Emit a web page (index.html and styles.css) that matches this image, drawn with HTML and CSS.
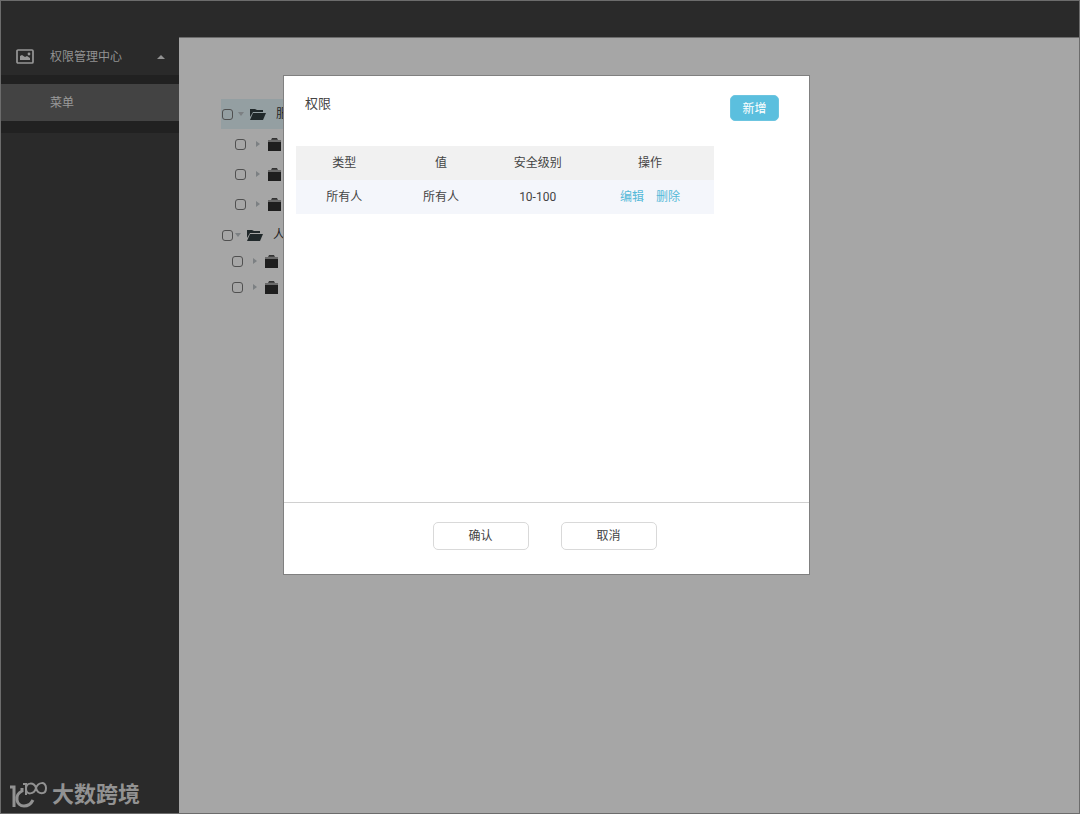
FILE: index.html
```html
<!DOCTYPE html>
<html lang="zh-CN">
<head>
    <meta charset="UTF-8">
    <meta name="viewport" content="width=device-width, initial-scale=1.0">
    <title>权限管理中心</title>
    <link rel="stylesheet" href="styles.css">
</head>
<body>
    <!-- shared icons -->
    <svg class="sprite" aria-hidden="true">
        <symbol id="folder" viewBox="0 0 14 13">
            <path fill="#444" d="M1 3V2h3l1-2h5l1 2h2v1z"/>
            <path fill="#1e1e1e" d="M1 4h13v9H1z"/>
            <path fill="#6a6a6a" d="M1 2h13v2H1z"/>
            <path fill="#333" d="M5 0h5v1H5z"/>
        </symbol>
        <symbol id="folder-open" viewBox="0 0 17 13">
            <path fill="#20282a" d="M1 9V1h5l2 1h6v2H4z"/>
            <path fill="#20282a" d="M4 5h13l-3 7H1z"/>
        </symbol>
    </svg>

    <header class="topbar"></header>
    <div class="page">
        <aside class="sidebar">
            <nav>
                <a class="menu-title" href="#">
                    <svg class="menu-icon" viewBox="0 0 18 15">
                        <rect x="1" y="1" width="16" height="13" rx="1" fill="none" stroke="#979797" stroke-width="1.7"/>
                        <path fill="#979797" d="M4 11V7l2-1 3 2 2-1 3 2v2z"/>
                        <circle cx="13" cy="5" r="1.4" fill="#979797"/>
                    </svg>
                    <span>权限管理中心</span>
                    <i class="caret-up"></i>
                </a>
                <ul class="submenu">
                    <li><a href="#">菜单</a></li>
                </ul>
            </nav>
            <div class="logo">
                <svg class="logo-mark" viewBox="0 0 39 26">
                    <g fill="none" stroke="#929292">
                        <path stroke-width="3" d="M1 5h4v20"/>
                        <path stroke-width="3" d="M13 6v3c-8 4-6 15 2 15 4 0 7-2 9-6"/>
                        <path stroke-width="2" d="M14 2h3v11"/>
                        <path stroke-width="2" d="M17 7c0-7 8-7 10-1 2 7 10 7 10 0s-8-6-10 0c-2 7-10 7-10 1"/>
                    </g>
                </svg>
                <span>大数跨境</span>
            </div>
        </aside>

        <main class="content">
            <ul class="tree">
                <li class="node open active">
                    <input type="checkbox" aria-label="服"><i class="arrow-down"></i>
                    <svg class="folder-open"><use href="#folder-open"/></svg><span>服</span>
                </li>
                <li class="node child">
                    <input type="checkbox" aria-label="1"><i class="arrow-right"></i>
                    <svg class="folder"><use href="#folder"/></svg>
                </li>
                <li class="node child">
                    <input type="checkbox" aria-label="2"><i class="arrow-right"></i>
                    <svg class="folder"><use href="#folder"/></svg>
                </li>
                <li class="node child">
                    <input type="checkbox" aria-label="3"><i class="arrow-right"></i>
                    <svg class="folder"><use href="#folder"/></svg>
                </li>
            </ul>
            <ul class="tree compact">
                <li class="node open">
                    <input type="checkbox" aria-label="人"><i class="arrow-down"></i>
                    <svg class="folder-open"><use href="#folder-open"/></svg><span>人</span>
                </li>
                <li class="node child">
                    <input type="checkbox" aria-label="1"><i class="arrow-right"></i>
                    <svg class="folder"><use href="#folder"/></svg>
                </li>
                <li class="node child">
                    <input type="checkbox" aria-label="2"><i class="arrow-right"></i>
                    <svg class="folder"><use href="#folder"/></svg>
                </li>
            </ul>
        </main>
    </div>

    <div class="overlay">
        <section class="modal" role="dialog" aria-labelledby="modal-title">
            <div class="modal-header">
                <h2 id="modal-title">权限</h2>
                <button class="btn-add" type="button">新增</button>
            </div>
            <div class="modal-body">
                <table>
                    <thead>
                        <tr>
                            <th>类型</th>
                            <th>值</th>
                            <th>安全级别</th>
                            <th class="actions">操作</th>
                        </tr>
                    </thead>
                    <tbody>
                        <tr>
                            <td>所有人</td>
                            <td>所有人</td>
                            <td>10-100</td>
                            <td class="actions"><a href="#">编辑</a><a href="#">删除</a></td>
                        </tr>
                    </tbody>
                </table>
            </div>
            <div class="modal-footer">
                <button type="button">确认</button>
                <button type="button">取消</button>
            </div>
        </section>
    </div>
</body>
</html>
```
FILE: styles.css
```css
* {
    box-sizing: border-box;
}
body {
    margin: 0;
    min-height: 100vh;
    display: flex;
    flex-direction: column;
    font-family: Roboto, "Noto Sans CJK SC", sans-serif;
    font-size: 12px;
    line-height: 18px;
    color: #444;
    background-color: #a6a6a6;
    border: 1px solid #6c6c6c;
}
ul {
    list-style-type: none;
    margin: 0;
    padding: 0;
}
a {
    text-decoration: none;
}
button {
    font: inherit;
    cursor: pointer;
}
.sprite {
    display: none;
}

/* Top bar and sidebar */
.topbar {
    height: 36px;
    background-color: #2a2a2a;
}
.page {
    flex: 1;
    display: flex;
}
.sidebar {
    width: 178px;
    display: flex;
    flex-direction: column;
    justify-content: space-between;
    background-color: #2a2a2a;
}
.menu-title {
    display: flex;
    align-items: center;
    height: 38px;
    padding: 1px 14px 0 15px;
    color: #929292;
}
.menu-icon {
    width: 18px;
    height: 15px;
    margin-right: 16px;
}
.caret-up {
    margin-left: auto;
    border: 4px solid transparent;
    border-top: 0;
    border-bottom-color: #929292;
}
.submenu {
    padding: 9px 0 12px;
    background-color: #212121;
}
.submenu a {
    display: block;
    padding: 10px 49px 9px;
    color: #9a9a9a;
    background-color: #434343;
}
.logo {
    display: flex;
    align-items: center;
    gap: 4px;
    padding: 0 8px 4px;
    font-size: 22px;
    font-weight: bold;
    line-height: 28px;
    color: #929292;
}
.logo-mark {
    width: 39px;
    height: 26px;
}

/* Tree */
.content {
    flex: 1;
    padding: 61px 42px;
    border-top: 1px solid #6c6c6c;
}
.tree {
    max-width: 400px;
}
.node {
    display: flex;
    align-items: center;
    height: 30px;
    color: #222;
}
.node.active {
    background-color: #949fa2;
}
.node input {
    appearance: none;
    width: 11px;
    height: 11px;
    margin: 0 5px 0 1px;
    border: 1px solid #505050;
    border-radius: 3px;
}
.node.child {
    padding-left: 13px;
}
.node.child input {
    margin-right: 10px;
}
.arrow-down {
    border: 3px solid transparent;
    border-top: 4px solid #7c8083;
    border-bottom: 0;
}
.arrow-right {
    border: 3px solid transparent;
    border-left: 4px solid #7c8083;
    border-right: 0;
}
.folder-open {
    width: 17px;
    height: 13px;
    margin: 0 10px 0 5px;
}
.folder {
    width: 14px;
    height: 13px;
    margin-left: 7px;
}
.compact {
    margin-top: 3px;
}
.compact .node {
    height: 26px;
}
.compact .open input {
    margin-right: 2px;
}
.compact .child {
    padding-left: 10px;
}

/* Modal */
.overlay {
    position: fixed;
    inset: 0;
    display: flex;
    justify-content: center;
    align-items: flex-start;
    padding: 75px 0 0 13px;
}
.modal {
    width: 527px;
    background-color: #fff;
    border: 1px solid #808080;
}
.modal-header {
    display: flex;
    justify-content: space-between;
    align-items: flex-start;
    padding: 19px 30px 25px 21px;
}
.modal-header h2 {
    margin: 0;
    font-size: 13px;
    font-weight: normal;
}
.btn-add {
    width: 49px;
    height: 26px;
    padding: 1px 0 0;
    color: #fff;
    background-color: #5bbfde;
    border: 1px solid #6cc5e0;
    border-radius: 5px;
}
.modal-body {
    min-height: 356px;
    padding: 0 12px;
}
table {
    width: 418px;
    table-layout: fixed;
    border-collapse: collapse;
    text-align: center;
}
th, td {
    height: 34px;
    padding: 0;
    font-weight: normal;
}
th {
    background-color: #f1f1f1;
}
td {
    background-color: #f4f6fb;
}
.actions {
    width: 128px;
}
td a {
    margin: 0 6px;
    color: #55b9d8;
}
.modal-footer {
    display: flex;
    justify-content: center;
    gap: 32px;
    padding: 19px 4px 24px 0;
    border-top: 1px solid #d0d0d0;
}
.modal-footer button {
    width: 96px;
    height: 28px;
    padding: 0;
    color: #444;
    background-color: #fff;
    border: 1px solid #d9d9d9;
    border-radius: 5px;
}
```
